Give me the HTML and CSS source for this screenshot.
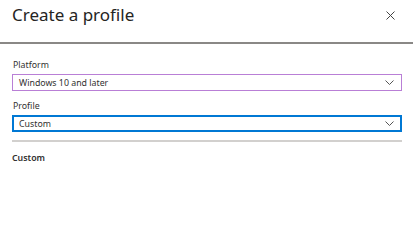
FILE: index.html
```html
<!DOCTYPE html>
<html>
<head>
<meta charset="utf-8">
<link rel="stylesheet" href="styles.css">
</head>
<body>
<div class="panel">
  <div class="header">
    <h1 class="title">Create a profile</h1>
    <button class="close" aria-label="Close">
      <svg width="9" height="9" viewBox="0 0 9 9"><path d="M0.5 0.5 L8.5 8.5 M8.5 0.5 L0.5 8.5" stroke="#444" stroke-width="1" fill="none"/></svg>
    </button>
  </div>
  <div class="content">
    <div class="field">
      <label class="label">Platform</label>
      <div class="select select-platform">
        <span class="value">Windows 10 and later</span>
        <svg class="chev" width="9" height="5" viewBox="0 0 9 5"><path d="M0.5 0.5 L4.5 4.5 L8.5 0.5" stroke="#555" stroke-width="1" fill="none"/></svg>
      </div>
    </div>
    <div class="field">
      <label class="label">Profile</label>
      <div class="select select-profile">
        <span class="value">Custom</span>
        <svg class="chev" width="9" height="5" viewBox="0 0 9 5"><path d="M0.5 0.5 L4.5 4.5 L8.5 0.5" stroke="#555" stroke-width="1" fill="none"/></svg>
      </div>
    </div>
    <div class="divider"></div>
    <div class="section">Custom</div>
  </div>
</div>
</body>
</html>
```
FILE: styles.css
```css
html, body {
  margin: 0;
  padding: 0;
  background: #ffffff;
}
body {
  font-family: "Noto Sans", "Open Sans", sans-serif;
  color: #323130;
  width: 413px;
  height: 203px;
  overflow: hidden;
}
.header {
  height: 42px;
  display: flex;
  align-items: flex-start;
  justify-content: space-between;
  padding: 0 12px;
  border-bottom: 2px solid #8a8886;
}
.title {
  margin: 0;
  padding-top: 2px;
  font-size: 17px;
  font-weight: 400;
  line-height: 26px;
  color: #252423;
}
.close {
  margin-top: 10px;
  margin-right: 6px;
  width: 10px;
  height: 10px;
  padding: 0;
  border: none;
  background: none;
  display: flex;
  align-items: center;
  justify-content: center;
}
.content {
  padding: 14px 12px 0 12px;
}
.field {
  display: flex;
  flex-direction: column;
  margin-bottom: 8px;
}
.label {
  font-size: 8.8px;
  line-height: 14px;
  color: #323130;
  margin-bottom: 2px;
  padding-left: 1px;
}
.select {
  height: 17px;
  box-sizing: border-box;
  display: flex;
  align-items: center;
  justify-content: space-between;
  padding: 0 7px 0 6px;
  width: 390px;
}
.select-platform {
  border: 1px solid #b97fd6;
}
.select-profile {
  border: 2px solid #0078d4;
  padding-left: 5px;
  padding-right: 6px;
}
.value {
  font-size: 8.8px;
  line-height: 14px;
  color: #323130;
}
.chev {
  display: block;
}
.divider {
  width: 390px;
  height: 2px;
  background: #d2d0ce;
}
.section {
  margin-top: 9px;
  font-size: 8.8px;
  font-weight: 600;
  line-height: 14px;
  color: #323130;
}
```
